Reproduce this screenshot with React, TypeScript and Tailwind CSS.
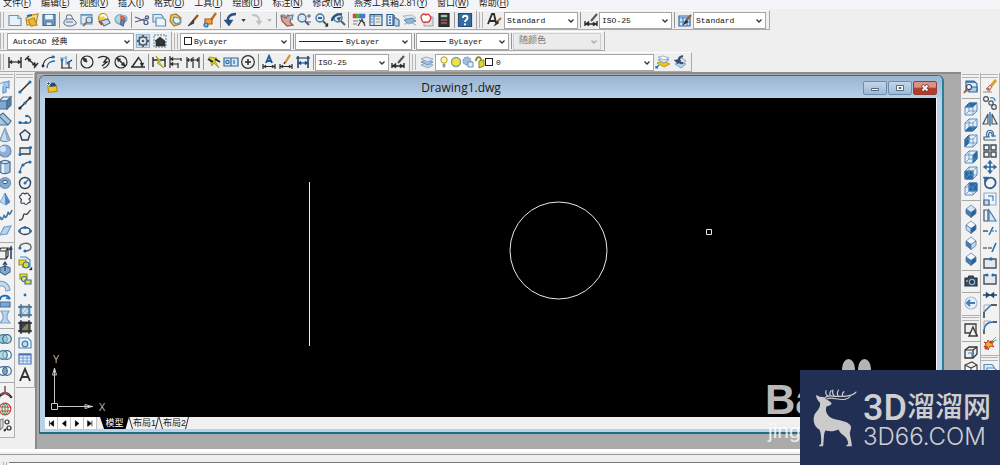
import { Fragment, type ReactNode } from 'react';

const INK = '#2b2b2b';
const BLUE = '#1f6fb8';
const PALE = '#b9d3ec';
const GOLD = '#f0c419';

const p = (d: string, stroke = INK, fill = 'none', width = 1.2) => (
  <path key={d + stroke + fill} d={d} stroke={stroke} fill={fill} strokeWidth={width} />
);
const dot = (x: number, y: number, r = 1.4, fill = BLUE) => (
  <circle key={`${x}-${y}-${r}-${fill}`} cx={x} cy={y} r={r} fill={fill} stroke="none" />
);
const ring = (x: number, y: number, r: number, stroke = INK, fill = 'none', width = 1.2) => (
  <circle key={`r${x}-${y}-${r}`} cx={x} cy={y} r={r} stroke={stroke} fill={fill} strokeWidth={width} />
);

const cube = (face: 'top' | 'bottom' | 'left' | 'right' | 'front' | 'back') => {
  const faces = {
    top: 'M2 6L6 2H14L10 6Z',
    bottom: 'M2 14L6 10H14L10 14Z',
    left: 'M2 6L6 2V10L2 14Z',
    right: 'M10 6L14 2V10L10 14Z',
    front: 'M2 6H10V14H2Z',
    back: 'M6 2H14V10H6Z',
  };
  return [
    p('M2 6L6 2H14V10L10 14H2Z', '#5d8fbe', '#e2eefa', 1),
    p(faces[face], '#2b6aa8', '#2b6aa8', 1),
    p('M2 6H10V14M10 6L14 2M6 2V10H14M6 10L2 14', '#5d8fbe', 'none', 0.8),
  ];
};

const diamond = (dark: number) => [
  p('M8 2L13 6L8 9.500L3 6Z', '#5b83ac', dark === 0 ? '#d5e5f4' : '#f2f7fc', 0.8),
  p('M3 6L8 9.500V14.500L3 10.500Z', '#4879aa', dark === 1 ? '#c5daee' : '#4879aa', 0.8),
  p('M13 6L8 9.500V14.500L13 10.500Z', '#4879aa', dark === 2 ? '#c5daee' : '#275f98', 0.8),
];

const magnifier = (x: number, y: number) => [
  ring(x, y, 4, '#54728f', '#d6e9f8', 1.4),
  p(`M${x + 3} ${y + 3}L${x + 7} ${y + 7}`, '#4c5f74', 'none', 2),
];

const brush = [
  p('M14 3L9 9', '#8b6039', 'none', 2),
  p('M9 8L6 13L11 10Z', INK, INK, 0.5),
];

const icons: Record<string, ReactNode> = {
  new: [p('M2 3.500H11L14 6.500V13.500H2Z', '#6f95b5', '#e6f2fa'), p('M11 3.500V6.500H14', '#6f95b5', '#fff')],
  open: [p('M2 6L8 3L14 2L12 12L3 13Z', '#b4882a', '#f6dd7c'), p('M4 8L10 6L13 13L7 14Z', '#b4882a', '#e9b93a'), p('M3 4L8 3', BLUE, 'none', 2)],
  save: [p('M2 2.500H14V13.500H2Z', '#3d6a94', '#6d9ac4'), p('M4.500 3H11.500V7H4.500Z', '#fff', '#e9f3fb', 0.5), p('M5 10H11V13.500H5Z', '#3d6a94', '#dce8f2', 0.8)],
  print: [p('M4 7L5 3H9L11 7', '#5e7086', '#eef4fb', 1), p('M2 9L5 7H11L14 10V12L10 14H5L2 12Z', '#5e7086', '#e3e9f2', 1), p('M4 10H11', '#5e7086', 'none', 1)],
  preview: [p('M2 2.500H13V12H2Z', '#6f95b5', '#dcebf7'), p('M2 3H13', '#5e92bf', 'none', 1.4), ring(10, 8, 3, '#4d708f', '#c9e2f5'), p('M8 10L4 14', '#8b7460', 'none', 2)],
  publish: [ring(7, 6, 4.5, '#b78c1c', '#f4cf47'), p('M4 4L8 3L11 6', '#fff', 'none', 2), p('M5 9L12 7L14 11L8 14Z', '#5d7793', '#c9dbec'), p('M3 9L6 13', '#c33d2d', 'none', 2)],
  dwf: [p('M2 8C2 3 8 1 10 4C14 2 16 9 11 10C9 14 3 12 2 8Z', '#7ba7c6', '#a9dbe6'), p('M8 4L12 6L8 9Z', '#ce4b36', '#ef8b54'), p('M9 8L12 8L10 14L7 12Z', '#50689a', '#6b86b4')],
  cut: [p('M1 5L11 9M1 10L14 6', '#4c5c80'), ring(12, 10.5, 2, '#4c5c80'), ring(13, 5.5, 1.6, '#4c5c80')],
  copy: [p('M2 2.500H10L12 5V10H2Z', '#5f8fb7', '#d9ebf8'), p('M5 6H12L14.500 8V14H5Z', '#5f8fb7', '#eef6fc')],
  paste: [p('M3 3L8 2L13 6L12 12L6 14L2 9Z', '#a87b26', '#edc96b'), p('M6 5L11 6L13 10L8 12L5 9Z', '#5f8fb7', '#e6f1fa')],
  match: [p('M13 3L8 9', '#93552e', 'none', 2.2), p('M8 8L3 14L9 11Z', INK, '#4a4a4a', 0.8)],
  block: [p('M14 1L9 8', '#c46d20', 'none', 2.4), p('M3 7H10V12H3Z', '#b3521c', '#f0a63b'), ring(4, 13, 2, BLUE, '#8bb8e2')],
  undo: [p('M13 2C7 2 4 5 5 10', '#29507e', 'none', 2.4), p('M1 8H10L6 14Z', '#29507e', '#29507e', 0.5)],
  redo: [p('M3 3C8 3 11 5 10 10', '#c2c2c2', 'none', 2), p('M7 9L10 13L13 9Z', '#c2c2c2', '#c2c2c2', 0.5)],
  pan: [p('M2 4L7 6L9 3L12 6L11 10L14 13L8 14L3 9Z', '#8a5f58', '#dfa097'), p('M9 4L14 3L13 8', '#567ba3', '#a5c4e2'), p('M2 3L7 4', '#7b98bb', 'none', 2)],
  zoomRt: [...magnifier(6, 6), p('M11 4H15M13 2V6M11 10H15', '#4d6075', 'none', 1)],
  zoomWin: [...magnifier(7, 6), p('M5 6H9', BLUE, 'none', 2), p('M12 14.500H15V11Z', INK, INK, 0.3)],
  zoomPrev: [...magnifier(8, 6), p('M2 9C2 5 6 2 12 2', '#29507e', 'none', 2.2), p('M7 6L11 5L9 9Z', '#29507e', '#29507e', 0.5)],
  props: [p('M2 2H5V6H2Z', '#d32', '#e24a36', 0.5), p('M5 2H9V6H5Z', '#3a3', '#48b84c', 0.5), p('M9 2H14V6H9Z', '#36c', '#4978dc', 0.5), p('M2 9H7M2 12H6', '#777'), p('M7 14L11 7L14 14M8 8L14 11', '#444', 'none')],
  design: [p('M2 2.500H14V13.500H2Z', '#315c86', '#dcebf7'), p('M2 4H14M6 3V13', '#4f86b8', 'none', 1.2), p('M8 7H12M8 10H12', '#d4b15c', 'none', 1.6), p('M3 7H5M3 10H5', '#4f86b8')],
  palette: [p('M2 2.500H8V13.500H2Z', '#315c86', '#dcebf7'), p('M4 5H6M4 8H6M4 11H6', BLUE, 'none', 1.4), p('M9 5L14 8V14H10', '#4a6f94', '#bcd4ea'), p('M9 3V14', '#315c86')],
  sheet: [p('M1 4L10 3L14 6L5 7Z', '#a5b1b5', '#dfe7e6', 0.8), p('M2 8L10 6L14 9L6 12Z', '#4a7ca8', '#8db7da', 0.8), p('M2 12L10 11L14 13', '#a5b1b5')],
  markup: [p('M5 5H14V14H5Z', '#99a', '#d9dfe8', 0.9), p('M3 3Q5 1 7 3Q9 1 11 4Q13 6 11 8Q10 11 7 10Q3 11 3 8Q1 5 3 3Z', '#e03434', '#fff', 1.3)],
  calc: [p('M3 1.500H13V14.500H3Z', '#222', '#333'), p('M5 3H11V5H5Z', '#7a9', '#a7d6b3', 0.5), p('M5 8H11M5 11H11', '#c98077', 'none', 1.2)],
  help: [p('M1.500 1.500H14.500V14.500H1.500Z', '#234c78', '#356b9f'), p('M6 6C6 3 10.500 3 10.500 6C10.500 8 8 8 8 10', '#fff', 'none', 1.8), dot(8, 12.4, 1.1, '#fff')],
  textStyle: [p('M2 12L6 2H8L10 11M4 9H9', INK, 'none', 1.8), p('M15 6L11 10', '#b06a32', 'none', 2), p('M11 9L8 14L13 11Z', INK, INK, 0.4)],
  dimStyle: [p('M2 9V14M14 9V14M2 12H14', INK, 'none', 1.4), p('M2 12L6 9V14ZM14 12L10 10V14Z', INK, INK, 0.4), p('M14 2L8 9', '#555', 'none', 2)],
  tableStyle: [p('M2 4H13V14H2Z', '#3467a0', '#cfe2f6'), p('M2 6H13M2 10H13M6 5V14M10 5V14', '#4c83c0'), ...brush],
  gear: [p('M1.500 1.500H14.500V14.500H1.500Z', '#96b6d2', '#c3dbef'), ring(8, 8, 4, '#4a5966', '#dfe6ec', 1.6), p('M8 2V4M8 12V14M2 8H4M12 8H14M4 4L5 5M12 12L11 11M12 4L11 5M4 12L5 11', '#4a5966', 'none', 1.8), dot(8, 8, 1.3, '#4a5966')],
  home: [
    <path key="frame" d="M2 2H14V14H2Z" fill="none" stroke="#7aa6c4" strokeWidth="1.400" strokeDasharray="2 1" />,
    p('M3 8L8 4L13 8V13H4V8Z', '#222', '#333', 0.6),
  ],
  dLin: [p('M2 3V14M14 3V14', INK, 'none', 1.4), p('M2 8H14', INK), p('M2 8L5 6V10ZM14 8L11 6V10Z', INK, INK, 0.3)],
  dAli: [p('M1 6L5 2M10 14L14 9M3 4L12 12', INK, 'none', 1.4), p('M3 4L7 5L5 8ZM12 12L8 11L11 8Z', INK, INK, 0.3)],
  dArc: [p('M2 13C2 6 7 3 14 3', INK), p('M6 14C6 10 9 7 14 7', BLUE, 'none', 1.4), dot(2, 12, 1.4, INK), dot(12, 3)],
  dOrd: [p('M3 14H14M4 14V7M11 14V8L14 6', INK), p('M2 4H9M8 2V11', '#5e9bd0', 'none', 1), dot(4, 6), dot(10, 9)],
  dRad: [ring(8, 8, 6), p('M8 8L4 4', INK, 'none', 1.8), p('M4 4L8 5L5 8Z', INK, INK, 0.3)],
  dJog: [p('M2 4C8 0 15 4 13 9C12 12 9 14 7 14', INK), p('M11 4L8 8L11 8L6 12', INK, 'none', 1.4)],
  dDia: [ring(8, 8, 6), p('M4 4L12 12', INK, 'none', 1.6), p('M4 4L8 5L5 8ZM12 12L8 11L11 8Z', INK, INK, 0.3)],
  dAng: [p('M1 13H15M2 13L9 3', INK, 'none', 1.4), p('M8 4C12 6 12 9 12 12', INK), p('M10 9H14L12 13Z', INK, INK, 0.3)],
  dQuick: [p('M2 3V13M14 3V13M2 6H14', INK, 'none', 1.4), p('M5 2L10 7L8 8L13 14L6 9L8 8Z', '#9b951b', '#d9d52e', 0.8)],
  dBase: [p('M2 2V14M13 4V7M10 9V14M2 5H13M2 10H10', INK), p('M2 5L5 3V7ZM2 10L5 8V12Z', INK, INK, 0.3)],
  dCont: [p('M2 3V14M8 3V14M14 3V14M2 6H14', INK), p('M2 6L4 4V8ZM8 6L6 4V8ZM14 6L12 4V8Z', INK, INK, 0.3)],
  dTol: [p('M3 3L11 4L9 7L13 14L8 9L6 12Z', '#989419', '#d9d52e', 0.8), p('M2 5L7 8M9 5L14 8', INK, 'none', 2)],
  dBox: [p('M1 4H15V12H1Z', '#356c9b', '#d4e8f7'), p('M8 4V12M11 6V10', '#356c9b'), ring(4.5, 8, 1.7, '#356c9b')],
  dCtr: [ring(8, 8, 6.3), p('M8 5V11M5 8H11', INK, 'none', 1.5)],
  dEdit: [p('M2 10V15M14 10V15M2 12.500H14', INK), p('M2 12.500L5 11V14ZM14 12.500L11 11V14Z', INK, INK, 0.3), p('M5 9L8 2L11 9M6 7H10', '#1e5a99', 'none', 1.9)],
  dText: [p('M2 10V15M14 10V15M2 12.500H14', INK), p('M2 12.500L5 11V14ZM14 12.500L11 11V14Z', INK, INK, 0.3), p('M12 1L7 9', '#d4912a', 'none', 2.2), p('M7 8L6 10', INK)],
  dUpd: [p('M3 2V14M13 2V14', '#21466b', 'none', 1.6), p('M1 4H15', '#21466b'), p('M3 9H13', BLUE, 'none', 1.4), p('M3 9L6 7V11ZM13 9L10 7V11Z', '#21466b', '#21466b', 0.3)],
  layers: [p('M2 11L7 9L14 11L9 14Z', '#7d9cba', '#c5d9ec', 0.8), p('M2 8L7 6L14 8L9 11Z', '#5f8ab4', '#a3c3e0', 0.8), p('M2 5L7 3L14 5L9 8Z', '#7d9cba', '#dfebf6', 0.8)],
  layerCur: [p('M2 9L8 7L15 10L9 13Z', '#b58d10', GOLD, 0.8), p('M3 6L8 4L14 6L9 9Z', '#6b93b8', '#d8e8f5', 0.8), p('M3 3L8 2L14 4L9 6Z', '#8aa3ba', '#fff', 0.8), p('M4 11L1 14M1 12V14H3', BLUE)],
  layerPrev: [p('M3 10L8 8L14 10L9 14Z', '#6b93b8', '#bcd4ea', 0.8), p('M4 6L10 4L14 7L9 10Z', '#6b93b8', '#d8e8f5', 0.8), p('M11 9C6 10 5 3 11 2', '#35506e', 'none', 2.2), p('M2 6H9L6 10Z', '#35506e', '#35506e', 0.4)],
  poly: [p('M6 4L12 2V9L9 8V13L6 14Z', '#5f94c8', '#a7cdf0'), p('M2 5L7 3V8', '#8db4da', '#d6e8f8')],
  box: [p('M2 6L6 2H14L10 6Z', '#4c6f94', '#dce9f5'), p('M2 6H10V14H2Z', '#4c6f94', '#7fa9d2'), p('M10 6L14 2V10L10 14Z', '#4c6f94', '#4f7fae')],
  wedge: [p('M2 5L6 2L14 10L11 14H2Z', '#4c6f94', '#a8c6e4'), p('M2 5L11 14', '#4c6f94')],
  cone: [p('M8 1L13 13C10 15 6 15 3 13Z', '#7c97b2', '#c7dcf0'), p('M8 2L11 13', '#8caccb', 'none', 2)],
  sphere: [ring(8, 8, 6, '#6d8db5', '#8fb0d8'), dot(6, 6, 3, '#d3e3f4')],
  cyl: [p('M3 3V13C6 15 10 15 13 13V3', '#4c6f94', '#a8c6e4'), p('M3 3C6 1 10 1 13 3C10 5 6 5 3 3Z', '#4c6f94', '#eaf3fb'), p('M6 5V14', '#e9f3fb', 'none', 2)],
  torus: [ring(8, 8, 5.5, '#6d93ba', '#84aad4'), <ellipse key="hole" cx="8" cy="7" rx="2.500" ry="1.600" fill="#eef4fa" stroke="#355a82" />],
  pyr: [p('M8 2L3 11L9 14Z', '#6ea0d2', '#b7d7f3', 0.8), p('M8 2L9 14L13 11Z', '#4f86bd', '#4f86bd', 0.8)],
  helix: [p('M1 13Q4 8 4 12Q5 14 7 9Q7 7 8 10Q9 12 11 6Q11 4 12 7Q13 8 15 3', '#3e73a8', 'none', 1.6)],
  plane: [p('M3 12L7 4L14 3L10 11Z', '#6f9ecb', PALE)],
  extr: [p('M2 6H9V14H2ZM2 6L4 3H11L9 6M9 14L11 11V3', INK), p('M14 14V2M12 5L14 2L15 5', '#21466b', 'none', 1.6)],
  press: [p('M3 7L8 5L13 7V11L8 14L3 11Z', '#4c6f94', '#84aad4'), p('M8 10V1M6 4L8 1L10 4', '#21466b')],
  sweep: [p('M1 5C6 3 12 6 13 13L9 14C9 10 6 8 2 9Z', '#7da3c8', '#c4dcf1')],
  revolve: [p('M3 9H13V14H3Z', '#4c6f94', '#76a9d8'), p('M3 7C3 2 11 1 13 6M13 6L9 5', BLUE, 'none', 1.8)],
  loft: [p('M4 2H12L10 6V10L13 14H3L6 10V6Z', '#7da3c8', '#bad6f0')],
  union: [ring(6, 8, 4.3, '#3d7893', '#9bcbd8'), ring(10, 8, 4.3, '#3d6993', '#9bcbd899')],
  subtract: [ring(10, 8, 4.3, '#3d6993', '#f3f8fc'), ring(6, 8, 4.3, '#3d7893', '#9bcbd8aa')],
  intersect: [ring(6, 8, 4.3, '#3d6993', '#f3f8fc'), ring(10, 8, 4.3, '#3d6993', 'none'), p('M8 5C10 7 10 9 8 11C6 9 6 7 8 5Z', '#3d6993', '#6cb0d3', 0.6)],
  orbit: [p('M8 8V1M8 8L2 12M8 8L14 12M2 12C4 6 12 6 14 12', '#333'), dot(8, 8, 1.6, '#d33'), dot(2, 12, 1.3, '#333'), dot(14, 12, 1.3, '#333')],
  globe: [ring(8, 8, 5.8, '#c4422f'), p('M8 2C4 5 4 11 8 14C12 11 12 5 8 2ZM8 2V14', '#2c8d54', 'none', 1), p('M2 6H14M2 10H14', '#c4422f', 'none', 1)],
  steps: [p('M3 3L6 2V10L3 13Z', '#888', '#ddd'), ring(10, 5, 2), ring(12, 11, 2), p('M7 14L9 12', INK, 'none', 1.8)],
  line: [p('M3 13L13 3', INK, 'none', 1.4), dot(3, 13, 1.6), dot(13, 3, 1.6)],
  xline: [p('M2 14L14 2', INK, 'none', 1.5), dot(3, 13, 1.6, INK), dot(13, 3, 1.6, INK), dot(8, 8, 1.6)],
  pline: [p('M2 12H12C15 11 14 5 10 5H8', '#5b6570', 'none', 1.3), dot(3, 11.5, 1.6), dot(9, 11.5, 1.6), dot(10, 5, 1.3)],
  polygon: [p('M8 3L13 7L11 13H5L3 7Z', '#36404a', '#e4eef7', 1.4)],
  rect: [p('M3 5H13V11H3Z', '#36404a', '#dfe9f2', 1.3), dot(3, 11.5, 1.6), dot(13.5, 4.5, 1.6)],
  arc: [p('M3 14C3 7 8 3 13 3', '#5b6570', 'none', 1.4), dot(3, 13, 1.6), dot(6, 6, 1.6), dot(13, 3, 1.6)],
  circle: [ring(8, 8, 5.5, '#36404a', '#eef4f9', 1.4), p('M8 8L12 4', BLUE), dot(8, 8, 1.5)],
  cloud: [p('M4 4Q5 1 8 3Q11 1 12 4Q15 6 12 8Q15 11 11 12Q9 15 7 12Q3 13 4 10Q5 8 4 8Q1 6 4 4Z', '#36404a', '#f4f8fb')],
  spline: [p('M2 13C8 14 5 6 8 7C11 9 11 4 14 3', '#36404a', 'none', 1.3)],
  ellipse: [<ellipse key="e" cx="8" cy="8" rx="5.500" ry="3.500" stroke="#36404a" fill="#eef4f9" strokeWidth="1.400" />, dot(2.5, 8, 1.5), dot(13.5, 8, 1.5), dot(8, 4.5, 1.5)],
  earc: [p('M3 9C1 4 14 2 14 8C14 11 11 12 8 12', '#5b6570', 'none', 1.4), dot(3, 9, 1.6), dot(8, 12, 1.6)],
  insert: [p('M3 2H9L13 5V12H5', '#4c86b8', '#e2f0fb'), p('M2 5H9V10H2Z', '#9b951b', '#e7d73a'), ring(9, 10, 3, '#376f9f', '#e7d73a'), p('M12 15H15V12Z', INK, INK, 0.3)],
  make: [p('M3 3H10V8H3Z', '#9b951b', '#e7d73a'), ring(7, 8, 2.5, '#376f9f', '#f2e57a'), p('M8 9H14V13H8Z', '#376f9f', '#e7d73a')],
  point: [dot(8, 8, 1.4)],
  hatch: [p('M3 3H13V13H3Z', '#88aac8', '#c9dfef'), p('M4 1V15M12 1V15M1 4H15M1 12H15', '#3f6788', 'none', 1.3), p('M4 12L12 4M4 8L8 4M8 12L12 8', '#7ea6c8', 'none', 0.8)],
  gradient: [p('M3 3H13V13H3Z', '#333', '#3b4852'), p('M4 12L12 4V12Z', '#8a8454', '#8a8454'), p('M4 1V15M12 1V15M1 4H15M1 12H15', '#25313b', 'none', 1.3)],
  region: [p('M2 3H11L14 6V13H2Z', '#5588b5', '#e6f1fa'), ring(8, 9, 2.8, '#4879a5', '#c3dcf0')],
  table: [p('M2 3H14V13H2Z', '#4c74b8', '#e8f0fb'), p('M2 3.500H14', '#4c74b8', 'none', 2), p('M2 7H14M2 10H14M6 4V13M10 4V13', '#6d92d0', 'none', 0.9)],
  mtext: [p('M3 14L8 2L13 14M5 10H11', '#333', 'none', 1.9)],
  named: [p('M3 2H11L14 5V12H3Z', '#316ba1', '#dbebf9'), p('M3 3H12', '#316ba1', 'none', 1.6), p('M6 8H14V13H6Z', '#316ba1', '#a9cdf0'), ring(6, 8, 2.5, '#446', '#fff'), p('M4 10L1 14', '#a25f2a', 'none', 1.8)],
  top: cube('top'), bottom: cube('bottom'), left: cube('left'), right: cube('right'), front: cube('front'), back: cube('back'),
  sw: diamond(0), se: diamond(1), ne: diamond(2), nw: diamond(3),
  camera: [p('M2 5H5L6 3H10L11 5H14V13H2Z', '#26323e', '#3b4a59'), ring(9, 9, 2.6, '#8db5d8', '#334'), dot(4, 8, 1, '#8db5d8')],
  prevView: [ring(8, 8, 6, '#a7bfd6', '#e7eff7'), p('M4 8H12M7 5L4 8L7 11', '#4a7eae', 'none', 2)],
  wire2d: [p('M2 2H13V11H2ZM13 11L14.500 14', '#3b3b3b', '#eee', 1.3), p('M6 14L10 5L14 14Z', '#3b3b3b', '#f4f4f4', 1.4)],
  wire3d: [p('M2 6L6 3H14V10L10 14H2Z', '#333', '#e8eff6', 1.3), p('M2 6H10V14M10 6L14 3', '#333'), p('M5 9H9V13', '#4c83b8')],
  hidden: [p('M2 5L9 2L14 5V11L8 14L2 11ZM2 5L8 8L14 5M8 8V14', '#444', '#f3f3f3', 1.2)],
  erase: [p('M14 1L9 7', '#d9a423', 'none', 3), p('M8 6L4 10L7 12L10 8Z', '#9c5a50', '#e8d8d0', 0.8), p('M5 9L8 11', '#dd6052', 'none', 2), p('M1 13H10', '#999')],
  copyObj: [ring(4, 4, 2.4, '#48525c'), ring(9, 8, 2.2, '#48525c'), ring(12, 12, 2.3, '#48525c'), p('M8 3C12 2 13 4 13 6', BLUE)],
  mirror: [p('M6 3V13H1Z', '#48525c', '#e9eef2'), p('M10 3V13H15Z', '#48525c', '#e9eef2'), p('M8 1V15', BLUE, 'none', 1.4)],
  offset: [p('M2 13H14M2 13V10H5C2 1 14 1 11 10', '#3f5f80', 'none', 1.2), p('M5 10H7C5 4 11 4 10 9H14', BLUE, 'none', 1.2)],
  array: [p('M2 2H7V7H2ZM9 2H14V7H9ZM2 9H7V14H2ZM9 9H14V14H9Z', '#444c54', '#edf1f4', 1.4)],
  move: [p('M8 2V14M2 8H14', '#2f679c', 'none', 1.6), p('M5.500 4.500L8 1L10.500 4.500ZM5.500 11.500L8 15L10.500 11.500ZM4.500 5.500L1 8L4.500 10.500ZM11.500 5.500L15 8L11.500 10.500Z', '#2f679c', '#2f679c', 0.3)],
  rotate: [p('M5 4C11 0 15 6 13 10C10 15 3 14 3 8V5', '#33618f', 'none', 1.8), p('M1 2H7L4 7Z', '#33618f', '#33618f', 0.4)],
  scale: [p('M2 2H14V14H2Z', '#93aec6', '#edf3f8'), p('M2 9H7V14H2Z', '#3f5f80', '#c4dcf1'), p('M6 5H11V10', BLUE, 'none', 1)],
  stretch: [p('M2 3H6V14H2Z', '#48525c', '#edf3f8'), p('M7 3L14 14H7Z', '#3f7cb3', '#d8e8f6')],
  trim: [p('M1 8H6', INK), p('M7 12L11 4', BLUE, 'none', 1.6), <path key="rest" d="M10 8H15" stroke={BLUE} strokeDasharray="2 1" />],
  extend: [<path key="rest" d="M1 9H10" stroke={INK} strokeDasharray="4 1" />, p('M10 13L14 4', BLUE, 'none', 1.6)],
  breakPt: [p('M2 4H14V13H2Z', '#48525c', '#e4e9ee', 1.4), dot(9, 4, 1.8)],
  breakObj: [p('M5 4H2V13H14V4H11', '#48525c', '#e4e9ee', 1.4), dot(5, 4, 1.6), dot(11, 4, 1.6)],
  join: [p('M1 8H15', '#20476f', 'none', 1.5), p('M4 5L8 8L4 11ZM12 5L8 8L12 11Z', '#20476f', '#20476f', 0.4)],
  chamfer: [p('M2 15V9M9 2H15', INK, 'none', 1.4), p('M2 9L9 2', BLUE, 'none', 1.4), p('M2 9V2H9', '#999', 'none', 0.8)],
  fillet: [p('M2 15V11M11 3H15', INK, 'none', 1.4), p('M2 11C2 6 6 3 11 3', BLUE, 'none', 1.6), p('M2 9V2H9', '#999', 'none', 0.8)],
  explode: [p('M2 7L5 8L6 5L8 8L12 6L10 9L12 12L8 11L6 15L5 11L2 12L4 9Z', '#b93a22', '#f0b32e', 0.9), dot(4, 13, 1.5, '#c93a2a'), dot(9, 7, 1.5, '#c93a2a'), p('M10 6L14 2M12 6L15 5', '#8a9', 'none', 1)],
};

const Icon = ({ name }: { name: string }) => (
  <svg viewBox="0 0 16 16" className="block h-4 w-4 shrink-0" aria-hidden="true">
    {icons[name]}
  </svg>
);

const Tool = ({ name }: { name: string }) => (
  <button type="button" aria-label={name} className="flex h-4 w-[17px] shrink-0 items-center justify-center">
    <Icon name={name} />
  </button>
);

const Divider = () => (
  <div className="flex h-4 w-1 shrink-0 justify-center">
    <span className="h-full w-px bg-[#969696]" />
  </div>
);

/** A list of icon names; "|" stands for a divider, "v" and "V" for flyout arrows. */
const Tools = ({ names }: { names: string }) => (
  <>
    {names.split(' ').map((name, i) => (
      <Fragment key={i}>
        {name === '|' ? (
          <Divider />
        ) : name === 'v' || name === 'V' ? (
          <button type="button" aria-label="history" className="flex h-4 w-[9px] items-center justify-center">
            <svg viewBox="0 0 6 4" className="h-[3px] w-[5px]">
              <path d="M0 0H6L3 4Z" fill={name === 'v' ? '#24407c' : '#b5b5b5'} />
            </svg>
          </button>
        ) : (
          <Tool name={name} />
        )}
      </Fragment>
    ))}
  </>
);

const Toolbar = ({ label, children }: { label: string; children: ReactNode }) => (
  <div role="toolbar" aria-label={label} className="flex h-full shrink-0 items-center border-r border-b border-[#a9a9a9] border-t border-t-white pr-[3px]">
    <div className="flex h-4 w-2 shrink-0 justify-center gap-[2px]">
      <span className="w-px bg-[#b4b4b4]" />
      <span className="w-px bg-[#b4b4b4]" />
    </div>
    {children}
  </div>
);

type ComboProps = { label: string; value: string; width: string; pad?: string; disabled?: boolean; children?: ReactNode };

const Combo = ({ label, value, width, pad = 'pl-[2px]', disabled, children }: ComboProps) => (
  <div className={`relative h-[17px] shrink-0 border ${width} ${disabled ? 'border-[#cfcfcf] bg-[#ebebeb]' : 'border-[#a6a6a6] bg-white'}`}>
    <select
      aria-label={label}
      disabled={disabled}
      className={`block h-full w-full appearance-none bg-transparent ${pad} font-['Liberation_Mono','Noto_Sans_CJK_SC',monospace] text-[8px] leading-[15px] text-[#111] disabled:text-[9px] disabled:text-[#777] disabled:opacity-100`}
    >
      <option>{value}</option>
    </select>
    {children && <div className="pointer-events-none absolute inset-y-0 left-[3px] flex items-center">{children}</div>}
    <svg viewBox="0 0 6 4" className="pointer-events-none absolute top-[6px] right-[3px] h-1 w-[6px]">
      <path d="M0.500 0.500L3 3L5.500 0.500" fill="none" stroke={disabled ? '#aaa' : '#333'} strokeWidth="1.300" />
    </svg>
  </div>
);

const PaletteGrip = () => (
  <div className="flex h-[6px] shrink-0 flex-col gap-[2px] pt-px pr-px">
    <span className="h-px bg-[#b4b4b4]" />
    <span className="h-px bg-[#b4b4b4]" />
  </div>
);

const Palette = ({ label, names }: { label: string; names: string }) => (
  <div role="toolbar" aria-label={label} className="flex shrink-0 flex-col overflow-hidden border-r border-b border-[#b0b0b0] bg-[#f2f2f2] pb-1">
    <PaletteGrip />
    {names.split(' ').map((name, i) =>
      name === '|' ? (
        <div key={i} className="flex h-[6px] shrink-0 items-center">
          <span className="h-px w-full bg-[#a8a8a8]" />
        </div>
      ) : (
        <button key={i} type="button" aria-label={name} className="flex h-4 w-full shrink-0 justify-end pr-[1px]">
          <Icon name={name} />
        </button>
      ),
    )}
  </div>
);

const menus = [
  ['文件', 'F'], ['编辑', 'E'], ['视图', 'V'], ['插入', 'I'], ['格式', 'O'], ['工具', 'T'],
  ['绘图', 'D'], ['标注', 'N'], ['修改', 'M'], ['燕秀工具箱2.81', 'Y'], ['窗口', 'W'], ['帮助', 'H'],
];

const MenuBar = () => (
  <nav className="flex h-[9px] shrink-0 items-end gap-[10px] overflow-hidden bg-[#f4f5f8] pl-[3px] font-['Open_Sans','Noto_Sans_CJK_SC',sans-serif] text-[9px] leading-[12px] text-[#222]">
    {menus.map(([name, key]) => (
      <button key={key} type="button" className="h-3 shrink-0 whitespace-nowrap">
        {name}(<u>{key}</u>)
      </button>
    ))}
  </nav>
);

const CaptionButton = ({ label, tone, children }: { label: string; tone: string; children: ReactNode }) => (
  <button type="button" aria-label={label} className={`flex h-[14px] w-6 items-center justify-center rounded-[2px] border ${tone}`}>
    <svg viewBox="0 0 10 8" className="h-2 w-[10px]">{children}</svg>
  </button>
);

const BLUE_TONE = 'border-[#6f8dab] bg-linear-to-b from-[#c3d6ea] to-[#9db9d6]';

const Slash = ({ d }: { d: string }) => (
  <svg viewBox="0 0 4 12" className="h-3 w-1 shrink-0">
    <path d={d} fill="none" stroke="#333" />
  </svg>
);

const SheetTabs = () => (
  <div className="flex h-3 shrink-0 items-stretch bg-[#f0f0f0] font-['Liberation_Sans','Noto_Sans_CJK_SC',sans-serif] text-[9px] leading-3 text-[#222]">
    {['M3 1V9M9 1L4 5L9 9Z', 'M8 1L3 5L8 9Z', 'M3 1L8 5L3 9Z', 'M8 1V9M2 1L7 5L2 9Z'].map((d) => (
      <button key={d} type="button" aria-label="scroll tabs" className="flex w-[13px] items-center justify-center border-r border-[#c4c4c4] bg-white pt-px">
        <svg viewBox="0 0 12 10" className="h-[7px] w-[9px]">
          <path d={d} fill="#000" stroke="#000" />
        </svg>
      </button>
    ))}
    <button type="button" className="ml-[3px] w-[29px] bg-black text-white [clip-path:polygon(0_0,100%_0,88%_100%,14%_100%)]">模型</button>
    <Slash d="M0 0L3.500 12" />
    <button type="button" className="w-[22px] whitespace-nowrap">布局1</button>
    <Slash d="M3.500 0L0.500 12" />
    <Slash d="M0 0L3.500 12" />
    <button type="button" className="w-[22px] whitespace-nowrap">布局2</button>
    <Slash d="M3.500 0L0.500 12" />
  </div>
);

const Canvas = () => (
  <div className="relative min-h-0 flex-1 overflow-hidden bg-black">
    <svg className="block h-full w-full" aria-label="drawing">
      <g fill="none" stroke="#e8e8e8" strokeWidth="1">
        <path d="M264.500 84V248" />
        <circle cx="513.500" cy="152.500" r="48.500" />
        <path d="M661.500 131.500H666.500V136.500H661.500Z" />
      </g>
    </svg>
    <svg viewBox="0 0 70 70" className="absolute bottom-0 left-0 h-[70px] w-[70px]">
      <g fill="none" stroke="#c8c8c8" strokeWidth="1">
        <path d="M6.500 56.500H12.500V62.500H6.500Z" />
        <path d="M9.500 56V21M7.500 28L9.500 21L11.500 28Z" />
        <path d="M13 59.500H48M40 57.500L47 59.500L40 61.500Z" />
      </g>
      <text x="11" y="16" textAnchor="middle" fontSize="10" fill="#b8b8b8" fontFamily="Liberation Sans, sans-serif">Y</text>
      <text x="57" y="64" textAnchor="middle" fontSize="10" fill="#b8b8b8" fontFamily="Liberation Sans, sans-serif">X</text>
    </svg>
  </div>
);

const DrawingWindow = () => (
  <section className="flex min-h-0 flex-1 flex-col rounded-t-[6px] border border-r-2 border-b-2 border-[#4c6276] border-r-[#2b7f95] border-b-[#1d6f80] bg-[#b9d1ea] px-[5px] pb-[3px]">
    <header className="-mx-[5px] flex h-[22px] shrink-0 items-center rounded-t-[5px] bg-linear-to-b from-[#9ab3d0] to-[#b7cfe9] px-[5px]">
      <svg viewBox="0 0 16 16" className="h-[14px] w-[14px]">
        <path d="M3 4L13 6L14 13L4 14Z" fill="#f4c51c" stroke="#a57b10" />
        <path d="M6 3H11L13 7L5 8Z" fill="#27486d" />
        <path d="M4 1V7M1 4H7M2 2L6 6M6 2L2 6" stroke="#fff" />
        <path d="M4 2V6M2 4H6" stroke="#345c86" />
      </svg>
      <h1 className="flex-1 pt-px text-center font-['Open_Sans','Noto_Sans',sans-serif] text-[12px] leading-[20px] text-[#1a1a1a]">Drawing1.dwg</h1>
      <div className="flex gap-px pt-px">
        <CaptionButton label="Minimize" tone={BLUE_TONE}>
          <path d="M1.500 4.500H8.500V6.500H1.500Z" fill="#fff" stroke="#55697d" />
        </CaptionButton>
        <CaptionButton label="Maximize" tone={BLUE_TONE}>
          <path d="M1.500 1.500H8.500V6.500H1.500Z" fill="#fff" stroke="#55697d" />
          <path d="M4 3.500H6V4.500H4Z" fill="#55697d" stroke="#55697d" />
        </CaptionButton>
        <CaptionButton label="Close" tone="border-[#8c4038] bg-linear-to-b from-[#dc9286] from-40% to-[#b83a28] to-55%">
          <path d="M2 1L8 7M8 1L2 7" stroke="#6b3a37" strokeWidth="3.200" />
          <path d="M2.500 1.500L7.500 6.500M7.500 1.500L2.500 6.500" stroke="#fff" strokeWidth="1.800" />
        </CaptionButton>
      </div>
    </header>
    <div className="flex min-h-0 flex-1 flex-col border-r border-[#f5f5f5]">
      <Canvas />
      <SheetTabs />
    </div>
  </section>
);

const Swatch = () => <span className="h-2 w-2 border border-[#222] bg-white" />;

const LayerState = () => (
  <svg viewBox="0 0 46 14" className="h-[14px] w-[46px]">
    <circle cx="5" cy="5" r="3.200" fill="#fdf5a8" stroke="#b29a32" />
    <path d="M4 9H6V12H4Z" fill="#9aa" stroke="#788" strokeWidth="0.600" />
    <circle cx="17" cy="7" r="4.500" fill="#f2e336" stroke="#7aa0a8" strokeWidth="1.400" />
    <circle cx="28" cy="6" r="4" fill="#9fbfdd" stroke="#6990b5" strokeDasharray="2 1" />
    <path d="M29 7H34V12H29Z" fill="#e4eef8" stroke="#6990b5" />
    <path d="M37 6C37 1 42 1 42 5" fill="none" stroke="#8a871c" strokeWidth="1.800" />
    <path d="M40 6L45 5V11L40 13Z" fill="#dad62e" stroke="#8a871c" />
  </svg>
);

const Deer = () => (
  <svg viewBox="180 125 140 182" className="h-[61px] w-[47px] shrink-0" aria-label="deer">
    <path
      d="M195 149L208 155Q216 152 224 160L241 172Q242 179 235 180L226 183C221 198 229 212 244 219C262 225 288 225 298 240Q302 248 297 257C293 264 300 277 302 302H285L286 298L291 296C291 282 282 272 272 266Q264 259 262 252C248 259 235 258 223 255C217 264 219 283 216 302H204L205 298L210 295C211 278 210 264 205 252C187 243 184 220 192 204C201 193 208 187 207 172Q195 162 195 149Z"
      fill="#cbcbcb"
    />
    <g fill="none" stroke="#cbcbcb" strokeWidth="3.500" strokeLinecap="round">
      <path d="M221 157C232 147 244 153 256 153C278 153 302 154 314 140" />
      <path d="M228 160C243 154 258 164 280 162Q292 160 296 154" />
      <path d="M230 151Q221 146 225 136M237 150Q234 142 240 136M249 152Q242 144 245 134M262 153Q255 145 262 134M276 153Q270 146 278 139" />
    </g>
  </svg>
);

export default function App() {
  return (
    <div className="relative flex h-screen flex-col overflow-hidden bg-[#efefef]">
      <MenuBar />
      <div className="flex h-[21px] shrink-0 overflow-hidden pt-px">
        <div className="-ml-[2px] flex">
          <Toolbar label="Standard">
            <Tools names="new open save | print preview publish dwf | cut copy paste match block | undo v redo V | pan zoomRt zoomWin zoomPrev | props design palette sheet markup calc | help" />
          </Toolbar>
          <Toolbar label="Styles">
            <Tool name="textStyle" />
            <Combo label="Text style" value="Standard" width="w-[74px] ml-[2px]" />
            <Divider />
            <Tool name="dimStyle" />
            <Combo label="Dimension style" value="ISO-25" width="w-[73px]" />
            <Divider />
            <Tool name="tableStyle" />
            <Combo label="Table style" value="Standard" width="w-[73px]" />
          </Toolbar>
        </div>
      </div>
      <div className="flex h-[21px] shrink-0 overflow-hidden pt-px">
        <div className="-ml-[2px] flex">
          <Toolbar label="Workspaces">
            <Combo label="Workspace" value="AutoCAD 经典" width="w-[127px] ml-px" pad="pl-[5px]" />
            <Tools names="gear home" />
          </Toolbar>
          <Toolbar label="Properties">
            <Combo label="Color" value="ByLayer" width="w-[111px]" pad="pl-[13px]">
              <Swatch />
            </Combo>
            <Divider />
            <Combo label="Linetype" value="ByLayer" width="w-[117px]" pad="pl-[50px]">
              <span className="h-px w-[44px] bg-[#222]" />
            </Combo>
            <Divider />
            <Combo label="Lineweight" value="ByLayer" width="w-[93px]" pad="pl-[32px]">
              <span className="h-px w-[26px] bg-[#222]" />
            </Combo>
            <Divider />
            <Combo label="Plot style" value="随颜色" width="w-[88px]" pad="pl-[5px]" disabled />
          </Toolbar>
        </div>
      </div>
      <div className="flex h-[21px] shrink-0 overflow-hidden pt-px">
        <div className="-ml-[2px] flex">
          <Toolbar label="Dimension">
            <Tools names="dLin dAli dArc dOrd | dRad dJog dDia dAng | dQuick dBase dCont | dTol dBox dCtr | dEdit dText dUpd |" />
            <Combo label="Current dimension style" value="ISO-25" width="w-[74px]" />
            <Tool name="dimStyle" />
          </Toolbar>
          <Toolbar label="Layers">
            <Tool name="layers" />
            <Combo label="Layer" value="0" width="w-[219px]" pad="pl-[60px]">
              <LayerState />
              <Swatch />
            </Combo>
            <Tools names="layerCur layerPrev" />
          </Toolbar>
        </div>
      </div>

      <div className="flex min-h-0 flex-1">
        <aside className="flex w-[35px] shrink-0 items-start pt-px">
          <div className="grid w-[15px] shrink-0">
            <Palette label="Modeling" names="poly box wedge cone sphere cyl torus pyr helix plane | extr press sweep revolve loft | union subtract intersect | orbit globe steps" />
          </div>
          <div className="grid w-5 shrink-0 pl-px">
            <Palette label="Draw" names="line xline pline polygon rect arc circle cloud spline ellipse earc insert make point hatch gradient region table mtext" />
          </div>
        </aside>
        <main className="flex min-w-0 flex-1 border-t-2 border-l-2 border-[#8b8b8b] bg-[#ababab] pt-px pr-[17px] pb-[15px] pl-[2px]">
          <div className="flex min-w-0 flex-1 flex-col">
            <DrawingWindow />
          </div>
        </main>
        <aside className="flex w-[39px] shrink-0 items-start overflow-hidden pt-px pl-px">
          <div className="grid w-[19px] shrink-0">
            <Palette label="View" names="named | top bottom left right front back | sw se ne nw | camera | prevView" />
            <Palette label="Visual styles" names="wire2d | wire3d hidden" />
          </div>
          <div className="grid w-[19px] shrink-0">
            <Palette label="Modify" names="erase copyObj mirror offset array move rotate scale stretch trim extend breakPt breakObj join chamfer fillet explode" />
            <Palette label="Draw order" names="copy" />
          </div>
        </aside>
      </div>

      <footer className="flex h-4 shrink-0 flex-col">
        <div className="h-[3px] shrink-0 bg-white" />
        <div className="mt-[2px] h-px shrink-0 bg-[#9a9a9a]" />
        <div className="mt-[7px] flex h-[3px] shrink-0 gap-[2px] pl-[3px]">
          <span className="w-px bg-[#b4b4b4]" />
          <span className="w-px bg-[#b4b4b4]" />
          <span className="flex-1 border-t border-[#777] bg-white" />
        </div>
      </footer>

      <div className="pointer-events-none absolute right-[129px] bottom-[86px] flex gap-[3px]">
        <span className="h-5 w-[13px] rounded-[50%] bg-[#b4b4b4]" />
        <span className="h-5 w-[13px] rounded-[50%] bg-[#b4b4b4]" />
      </div>
      <div className="pointer-events-none absolute right-0 bottom-[23px] w-[235px] font-['Liberation_Sans',sans-serif] text-[#b9b9b9]">
        <p className="text-[42px] leading-[40px] font-bold">Ba</p>
        <p className="pl-[3px] text-[21px] leading-[22px] text-white/80">jing</p>
      </div>
      <div className="absolute right-0 bottom-0 flex h-[95px] w-[200px] items-center gap-[5px] bg-[#222f55] pl-[11px] text-[#cfcfcf]">
        <Deer />
        <div className="flex flex-col whitespace-nowrap pt-1">
          <p className="flex items-center font-['Roboto','Noto_Sans_CJK_SC',sans-serif] text-[28px] leading-[34px] font-medium">
            <span className="text-[36px]">3D</span>溜溜网
          </p>
          <p className="font-['Inter',sans-serif] text-[24px] leading-[24px] font-light">3D66.COM</p>
        </div>
      </div>
    </div>
  );
}
